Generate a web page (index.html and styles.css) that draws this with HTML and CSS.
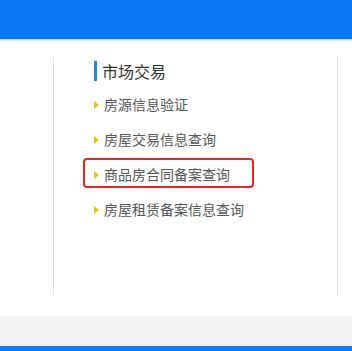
FILE: index.html
```html
<!DOCTYPE html>
<html lang="zh-CN">
<head>
<meta charset="utf-8">
<link rel="stylesheet" href="styles.css">
</head>
<body>
<div class="header"></div>
<main class="main">
  <section class="card">
    <h2 class="title">市场交易</h2>
    <ul class="list">
      <li class="item">房源信息验证</li>
      <li class="item">房屋交易信息查询</li>
      <li class="item highlighted">商品房合同备案查询<span class="mark"></span></li>
      <li class="item">房屋租赁备案信息查询</li>
    </ul>
  </section>
</main>
<div class="band"></div>
<div class="footer"></div>
</body>
</html>
```
FILE: styles.css
```css
html, body {
  margin: 0;
  padding: 0;
  background: #fff;
  font-family: "Microsoft YaHei", "Noto Sans CJK SC", "Noto Sans", sans-serif;
}
.header {
  height: 39px;
  background: #0a7af3;
  box-shadow: 0 1px 2px rgba(60, 90, 140, 0.45);
  position: relative;
}
.main {
  padding: 18px 0 21px 53px;
}
.card {
  width: 285px;
  height: 238px;
  box-sizing: border-box;
  border-left: 1px solid #dcdcdc;
  border-right: 1px solid #dcdcdc;
  padding: 4px 0 0 40px;
}
.title {
  margin: 0;
  height: 20px;
  display: flex;
  align-items: center;
  border-left: 3px solid #1c88e6;
  padding-left: 5px;
  font-size: 16px;
  font-weight: normal;
  color: #333;
  line-height: 20px;
}
.list {
  list-style: none;
  margin: 6px 0 0;
  padding: 0;
}
.item {
  position: relative;
  height: 35px;
  line-height: 35px;
  padding-left: 10px;
  font-size: 14px;
  color: #555;
}
.item::before {
  content: "";
  position: absolute;
  left: 0;
  top: 14px;
  border-left: 5px solid #f0bf14;
  border-top: 4px solid transparent;
  border-bottom: 4px solid transparent;
}
.mark {
  position: absolute;
  left: -11px;
  top: 1px;
  width: 171px;
  height: 30px;
  box-sizing: border-box;
  border: 2px solid #e62621;
  border-radius: 4px;
}
.band {
  height: 30px;
  background: #f2f2f4;
}
.footer {
  height: 10px;
  background: #0a7af3;
}
```
